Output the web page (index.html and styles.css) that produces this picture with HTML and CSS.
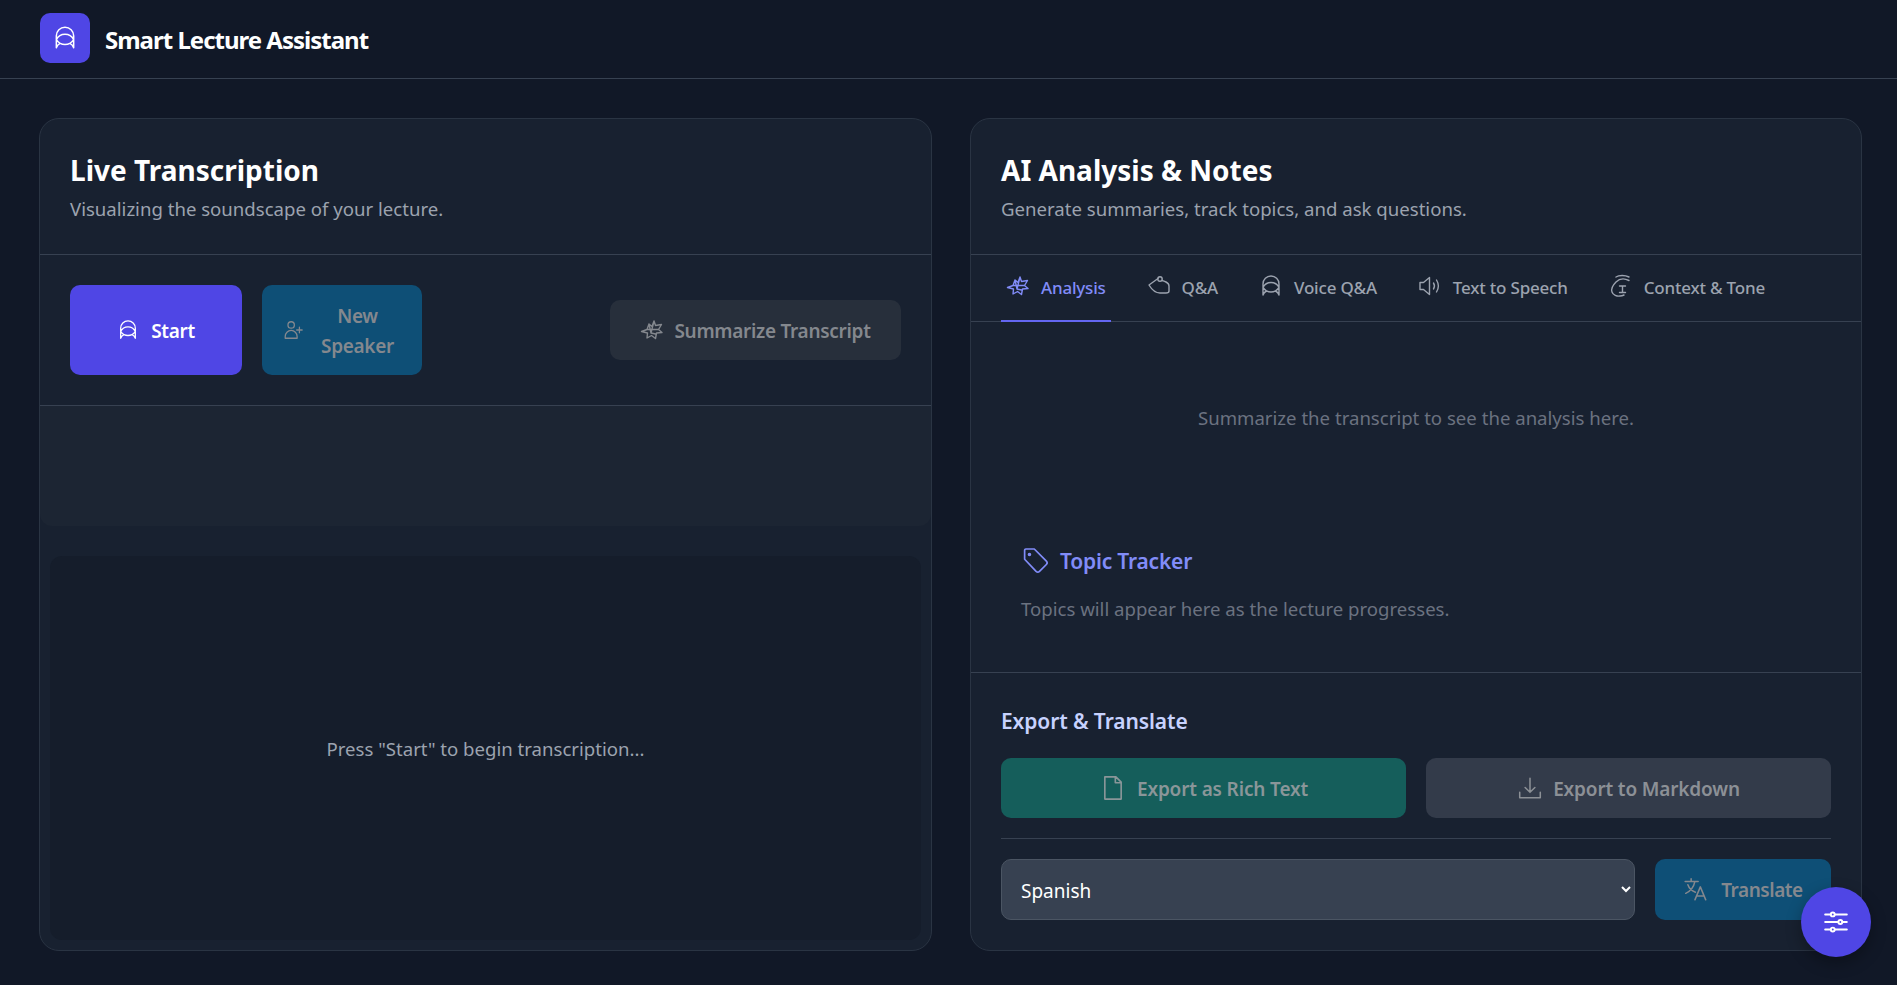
FILE: index.html
```html
<!DOCTYPE html>
<html lang="en">
<head>
  <meta charset="UTF-8">
  <meta name="viewport" content="width=device-width, initial-scale=1.0">
  <title>Smart Lecture Assistant</title>
  <link rel="stylesheet" href="styles.css">
</head>
<body>
  <svg class="icon-defs" width="0" height="0" aria-hidden="true">
    <symbol id="i-arch" viewBox="0 0 24 24">
      <path d="M4 21V10a8 8 0 0 1 16 0v11M4 13.500C6 9.500 9 8.500 12 8.500s6 1 8 5M4 13.500c2 3 5 4.500 8 4.500s6-1.500 8-4.500M4 21c.5-1.500 1.500-3 3.500-4M20 21c-.5-1.500-1.500-3-3.500-4" />
    </symbol>
    <symbol id="i-spark" viewBox="0 0 24 24">
      <path d="M1.500 13.500l5.500-2L9 6l3 2.500L14 3l1.500 4.500 6-1-3 5 3.500 3-5.500.5-1 5.500-4-3-4.500 2.500.5-5zM9 6l2 9M14 3l-3 12M7 11.500l11.500 0M11 15l4.500 1" />
    </symbol>
    <symbol id="i-bubble" viewBox="0 0 24 24">
      <path d="M11 4.500L2 11c3 5 7 8 11 8h6c2 0 3-1 3-2v-5c0-2-1-3-3-4-1-.5-2-1-4-1.500" />
      <circle cx="13" cy="5" r="2.200" />
    </symbol>
    <symbol id="i-user-plus" viewBox="0 0 24 24">
      <circle cx="10" cy="6.500" r="3.500" />
      <path d="M3.500 21v-2a6.500 6.500 0 0 1 13 0v2zM19 9v6M16 12h6" />
    </symbol>
    <symbol id="i-speaker" viewBox="0 0 24 24">
      <path d="M11.500 3.500v17l-6-5H2v-7h3.500zM15.500 9c1.300 2 1.300 4 0 6M18.500 6c2.500 4 2.500 8 0 12" />
    </symbol>
    <symbol id="i-context" viewBox="0 0 24 24">
      <path d="M7 3C10 1 16 1 20 3M20 6.500C15 4 10 5 7 8c-3 3-5 7-4 10 1 3 5 4.500 8 4 1 0 3-.5 4-1M10.500 12h6M13.500 12v6.500M10.500 18.500h6" />
    </symbol>
    <symbol id="i-tag" viewBox="0 0 24 24">
      <path d="M3 3.500A1 1 0 0 1 4 2.500h7l10 10a2 2 0 0 1 0 2.800l-5.700 5.700a2 2 0 0 1-2.800 0L3 11z" />
      <circle cx="7" cy="7" r=".8" />
    </symbol>
    <symbol id="i-file" viewBox="0 0 24 24">
      <path d="M5 21.500V2.500h9.500l4.500 4.500v14.500zM14 2.500V7.500h5" />
    </symbol>
    <symbol id="i-download" viewBox="0 0 24 24">
      <path d="M12 3v13M7.500 11.500L12 16l4.500-4.500M2.500 16v5h19v-5" />
    </symbol>
    <symbol id="i-translate" viewBox="0 0 24 24">
      <path d="M2 5h12M7.500 2.500V5M11 5c-1 5-4 9-8.500 11M4.500 8c1 3 3.500 5.500 7 7M11 22l5-12 5 12M12.500 18.500h7" />
    </symbol>
    <symbol id="i-sliders" viewBox="0 0 24 24">
      <path d="M2 5h5M11 5h11M2 12h12M18 12h4M2 19h5M11 19h11" />
      <circle cx="9" cy="5" r="1.800" />
      <circle cx="16" cy="12" r="1.800" />
      <circle cx="9" cy="19" r="1.800" />
    </symbol>
  </svg>

  <header class="top-bar">
    <div class="logo"><svg class="icon icon-logo"><use href="#i-arch"/></svg></div>
    <h1>Smart Lecture Assistant</h1>
  </header>

  <main class="columns">
    <section class="panel">
      <div class="panel-head">
        <h2>Live Transcription</h2>
        <p>Visualizing the soundscape of your lecture.</p>
      </div>
      <div class="controls">
        <div class="controls-left">
          <button class="btn btn-start"><svg class="icon"><use href="#i-arch"/></svg>Start</button>
          <button class="btn btn-speaker"><svg class="icon"><use href="#i-user-plus"/></svg><span class="btn-wrap">New Speaker</span></button>
        </div>
        <button class="btn btn-grey btn-summarize"><svg class="icon"><use href="#i-spark"/></svg>Summarize Transcript</button>
      </div>
      <div class="visualizer"></div>
      <div class="transcript-wrap">
        <div class="transcript">Press "Start" to begin transcription...</div>
      </div>
    </section>

    <section class="panel">
      <div class="panel-head">
        <h2>AI Analysis &amp; Notes</h2>
        <p>Generate summaries, track topics, and ask questions.</p>
      </div>
      <nav class="tabs">
        <a class="tab is-active"><svg class="icon"><use href="#i-spark"/></svg>Analysis</a>
        <a class="tab"><svg class="icon"><use href="#i-bubble"/></svg>Q&amp;A</a>
        <a class="tab"><svg class="icon"><use href="#i-arch"/></svg>Voice Q&amp;A</a>
        <a class="tab"><svg class="icon"><use href="#i-speaker"/></svg>Text to Speech</a>
        <a class="tab"><svg class="icon"><use href="#i-context"/></svg>Context &amp; Tone</a>
      </nav>
      <div class="analysis">
        <p class="analysis-empty">Summarize the transcript to see the analysis here.</p>
        <div class="topics">
          <h3><svg class="icon icon-tag"><use href="#i-tag"/></svg>Topic Tracker</h3>
          <p>Topics will appear here as the lecture progresses.</p>
        </div>
      </div>
      <div class="export">
        <h3>Export &amp; Translate</h3>
        <div class="export-row">
          <button class="btn btn-teal"><svg class="icon icon-file"><use href="#i-file"/></svg>Export as Rich Text</button>
          <button class="btn btn-slate"><svg class="icon"><use href="#i-download"/></svg>Export to Markdown</button>
        </div>
        <div class="translate-row">
          <select class="lang">
            <option>Spanish</option>
            <option>French</option>
            <option>German</option>
          </select>
          <button class="btn btn-translate"><svg class="icon"><use href="#i-translate"/></svg>Translate</button>
        </div>
      </div>
    </section>
  </main>

  <button class="fab" aria-label="Settings"><svg class="icon"><use href="#i-sliders"/></svg></button>
</body>
</html>
```

FILE: styles.css
```css
* {
    box-sizing: border-box;
}

body {
    margin: 0;
    height: 985px;
    overflow: hidden;
    background-color: #111827;
    color: #e5e7eb;
    font-family: "Noto Sans", "Open Sans", sans-serif;
    font-size: 18.6px;
}

h1, h2, h3, p {
    margin: 0;
}

.icon-defs {
    position: absolute;
}

.icon {
    width: 22px;
    height: 22px;
    flex: none;
    fill: none;
    stroke: currentColor;
    stroke-width: 1.4;
    stroke-linecap: round;
    stroke-linejoin: round;
}

/* barra superior */
.top-bar {
    height: 79px;
    display: flex;
    align-items: center;
    gap: 15px;
    padding: 0 40px 2px;
    border-bottom: 1px solid #374151;
}

.logo {
    width: 50px;
    height: 50px;
    display: flex;
    align-items: center;
    justify-content: center;
    background-color: #4f46e5;
    border-radius: 10px;
    color: #fff;
}

.icon-logo {
    width: 26px;
    height: 26px;
}

.top-bar h1 {
    padding-top: 2px;
    font-size: 24px;
    font-weight: 700;
    color: #fff;
    letter-spacing: -1px;
}

/* columnas */
.columns {
    display: grid;
    grid-template-columns: 893px 892px;
    gap: 38px;
    padding: 39px 35px 0 39px;
}

.panel {
    height: 833px;
    display: flex;
    flex-direction: column;
    background-color: #182130;
    border: 1px solid #2a3443;
    border-radius: 20px;
    overflow: hidden;
}

.panel-head {
    height: 136px;
    padding: 32px 30px 0;
    border-bottom: 1px solid #374151;
}

.panel-head h2 {
    font-size: 28px;
    font-weight: 700;
    line-height: 38px;
    color: #fff;
}

.panel-head p {
    margin-top: 6px;
    color: #9ca3af;
    line-height: 28px;
}

/* botones */
.btn {
    display: flex;
    align-items: center;
    justify-content: center;
    gap: 12px;
    padding-top: 2px;
    border: none;
    border-radius: 10px;
    font-family: inherit;
    font-size: 19px;
    font-weight: 600;
    letter-spacing: -0.3px;
    color: #fff;
}

.btn .icon {
    margin-top: -2px;
}

.controls {
    height: 151px;
    display: flex;
    align-items: center;
    justify-content: space-between;
    padding: 0 30px;
    border-bottom: 1px solid #374151;
}

.controls-left {
    display: flex;
    gap: 20px;
}

.btn-start {
    width: 172px;
    height: 90px;
    background-color: #4f46e5;
}

.btn-speaker {
    width: 160px;
    height: 90px;
    padding: 2px 20px 0;
    gap: 9px;
    background-color: #0e4f76;
    color: #84888e;
    line-height: 30px;
}

.btn-wrap {
    text-align: center;
}

.btn-grey {
    background-color: #272f3b;
    color: #84888e;
}

.btn-summarize {
    width: 291px;
    height: 60px;
    gap: 10px;
}

.btn-summarize .icon {
    width: 24px;
    height: 24px;
}

.visualizer {
    height: 120px;
    background-color: #1c2533;
    border-radius: 0 0 12px 12px;
}

.transcript-wrap {
    flex: 1;
    padding: 30px 10px 10px;
}

.transcript {
    height: 100%;
    display: flex;
    align-items: center;
    justify-content: center;
    background-color: #151d2b;
    border-radius: 12px;
    color: #9ca3af;
}

/* pestañas */
.tabs {
    height: 67px;
    display: flex;
    gap: 31px;
    padding: 0 30px;
    border-bottom: 1px solid #374151;
}

.tab {
    display: flex;
    align-items: center;
    gap: 11px;
    padding: 0 5px;
    margin-bottom: -1px;
    font-size: 17px;
    font-weight: 500;
    letter-spacing: -0.2px;
    color: #9ca3af;
    border-bottom: 2px solid transparent;
}

.tab .icon {
    width: 24px;
    height: 24px;
    margin-top: -4px;
}

.tab.is-active {
    color: #818cf8;
    border-bottom-color: #6366f1;
}

.analysis {
    height: 351px;
    padding: 0 30px;
    border-bottom: 1px solid #374151;
}

.analysis-empty {
    margin-top: 82px;
    text-align: center;
    color: #6b7280;
    line-height: 28px;
}

.topics {
    margin-top: 115px;
    padding-left: 20px;
}

.topics h3 {
    display: flex;
    align-items: center;
    gap: 10px;
    font-size: 21px;
    font-weight: 600;
    letter-spacing: -0.2px;
    color: #818cf8;
}

.icon-tag {
    width: 29px;
    height: 29px;
    margin-top: -2px;
}

.topics p {
    margin-top: 20px;
    color: #6b7280;
    line-height: 28px;
}

/* exportar */
.export {
    padding: 32px 30px 0;
}

.export h3 {
    font-size: 21px;
    font-weight: 600;
    letter-spacing: -0.1px;
    line-height: 32px;
    color: #c7d2fe;
}

.export-row {
    display: grid;
    grid-template-columns: 1fr 1fr;
    gap: 20px;
    margin-top: 21px;
    padding-bottom: 20px;
    border-bottom: 1px solid #374151;
}

.export-row .btn {
    height: 60px;
    gap: 10px;
    letter-spacing: -0.15px;
}

.export-row .icon,
.btn-translate .icon {
    width: 26px;
    height: 26px;
}

.export-row .icon-file {
    width: 28px;
    height: 28px;
}

.btn-teal {
    background-color: #155e5b;
    color: #8a9699;
}

.btn-slate {
    background-color: #333b4a;
    color: #8c9096;
}

.translate-row {
    display: flex;
    gap: 20px;
    margin-top: 20px;
}

.lang {
    flex: 1;
    height: 61px;
    padding: 2px 15px 0;
    background-color: #374151;
    border: 1px solid #4b5563;
    border-radius: 10px;
    font-family: inherit;
    font-size: 19px;
    color: #fff;
}

.btn-translate {
    width: 176px;
    height: 61px;
    padding-top: 1px;
    gap: 12px;
    letter-spacing: -0.45px;
    background-color: #0e4f76;
    color: #84888e;
}

.fab {
    position: absolute;
    right: 26px;
    bottom: 28px;
    width: 70px;
    height: 70px;
    display: flex;
    align-items: center;
    justify-content: center;
    border: none;
    border-radius: 50%;
    background-color: #4f46e5;
    box-shadow: 0 6px 16px rgba(0, 0, 0, 0.3);
    color: #fff;
}

.fab .icon {
    width: 26px;
    height: 26px;
    stroke-width: 1.8;
}
```
